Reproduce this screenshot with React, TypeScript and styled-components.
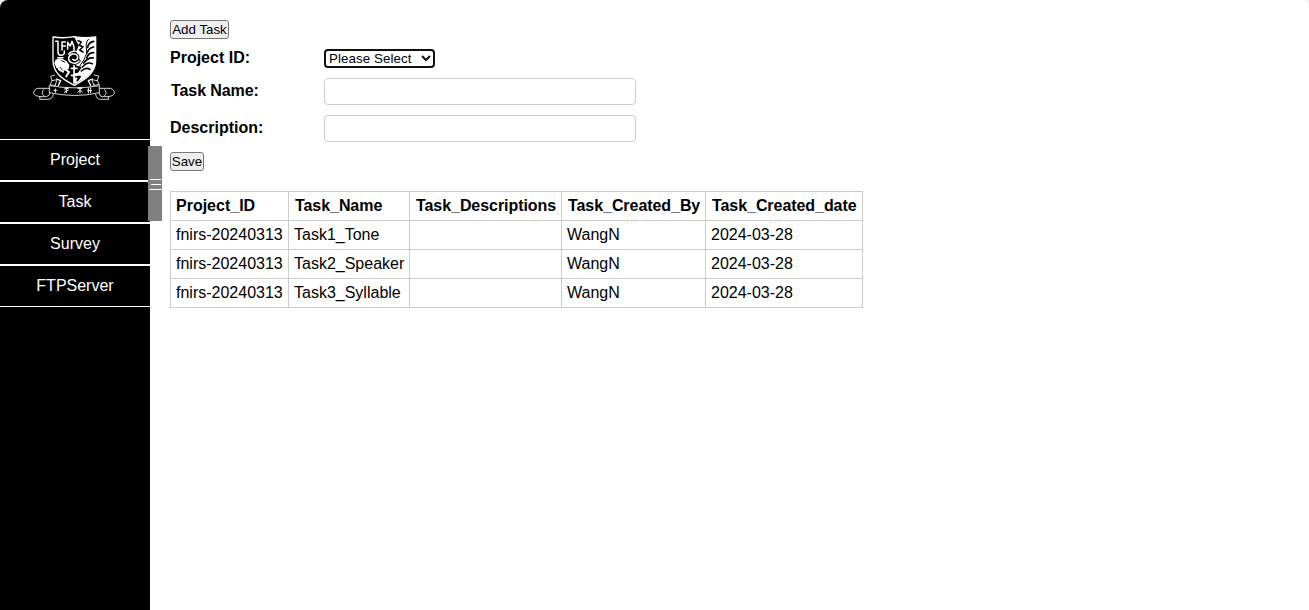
import React from 'react';
import styled, { createGlobalStyle } from 'styled-components';

const Global = createGlobalStyle`
  body { margin: 0; background: #f3f3f3; overflow: hidden; font: 16px/18px "Liberation Sans", Arial, sans-serif; color: #000; }
`;
const Page = styled.div`
  display: flex; height: 100vh; background: #fff; border-radius: 8px 8px 0 0; overflow: hidden; position: relative;
`;
const Sidebar = styled.aside`width: 150px; flex: none; background: #000;`;
const LogoArea = styled.div`
  height: 139px; box-sizing: border-box; padding: 30px 0 0 28px;
  svg { display: block; }
`;
const MenuItem = styled.a`
  display: block; box-sizing: border-box; height: 42px; line-height: 40px; text-align: center;
  color: #fff; border-top: 1px solid #fff; border-bottom: 1px solid #fff;
`;
const Handle = styled.div`
  position: absolute; left: 148px; top: 146px; width: 14px; height: 75px; box-sizing: border-box;
  padding: 33px 0 0 1px; background: #808080; display: flex; flex-direction: column; align-items: center; gap: 4px;
`;
const Grip = styled.span<{ $w: number }>`width: ${p => p.$w}px; height: 1px; background: #fff;`;
const Main = styled.main`padding: 20px; display: flex; flex-direction: column; align-items: flex-start;`;
const Button = styled.button<{ $w: number }>`
  box-sizing: border-box; width: ${p => p.$w}px; height: 19px; padding: 0; border: 1px solid #767676;
  border-radius: 3px; background: #efefef; color: #000; font: 13.333px/15px "Liberation Sans", Arial, sans-serif;
  white-space: nowrap; display: flex; align-items: center; justify-content: center;
`;
const Field = styled.div`
  display: flex; align-items: flex-start; margin-top: 10px;
`;
const Label = styled.label<{ $indent?: number; $drop?: number }>`
  width: 154px; box-sizing: border-box; padding: ${p => p.$drop || 0}px 0 0 ${p => p.$indent || 0}px; font-weight: 700;
  letter-spacing: ${p => (p.$indent ? '-0.08px' : 'normal')};
`;
const SelectBox = styled.div`
  box-sizing: border-box; width: 111px; height: 19px; border: 2px solid #101010; border-radius: 4px; background: #fff;
  display: flex; align-items: center; padding: 0 2px 0 3px; justify-content: space-between;
  font-size: 13.333px; line-height: 15px; letter-spacing: 0.08px; white-space: nowrap;
`;
const Input = styled.input`
  box-sizing: border-box; width: 312px; height: 27px; border: 1px solid #ccc; border-radius: 4px; padding: 5px; background: #fff;
`;
const SaveRow = styled.div`margin: 10px 0 20px;`;
const Table = styled.table`
  border-collapse: collapse; table-layout: fixed; width: 693px;
`;
const Cell = styled.td`
  border: 1px solid #ccc; padding: 5px; height: 18px; line-height: 18px; white-space: nowrap; text-align: left;
`;
const HeadCell = styled(Cell).attrs({ as: 'th' })<{ $inset: number }>`
  font-weight: 700; padding: 5px 0 5px ${p => 5 + p.$inset}px; letter-spacing: ${p => (p.$inset ? '-0.06px' : 'normal')};
`;

const Crest = () => (
  <svg width="92" height="74" viewBox="0 0 276 222" fill="none" stroke="#fff" strokeLinecap="round" strokeLinejoin="round">
    <path d="M75 21Q108 26 138 20Q170 26 203 21V91C203 129 174 147 139 166C103 148 75 129 75 91Z" fill="#000" strokeWidth="4" />
    <path d="M138 20Q170 27 202 22V92C202 128 172 145 139 163L138 134L155 111L139 103L155 90L145 67L152 46Z" fill="#fff" stroke="none" />
    <path d="M83 34H90V67C90 77 103 79 109 71V63M102 36V60M102 36H112M102 48H112M119 57V37L127 48L132 34L138 51V60M89 83H105" strokeWidth="4.5" />
    <path d="M82 90Q98 79 116 94L124 105L122 117L106 122L97 111L86 114L79 101Z" fill="#fff" stroke="none" />
    <path d="M93 118L105 125M112 118L123 126L115 139M88 111L96 117" strokeWidth="6" />
    <g stroke="#000">
      <path d="M150 32L160 36L153 46L165 50L155 60L165 66" strokeWidth="4.5" />
      <path d="M181 28C166 45 183 63 172 79C169 93 158 99 154 112" strokeWidth="3" />
      <path d="M197 34Q181 37 179 52M197 51Q181 54 178 68M197 68Q181 68 176 84M196 84Q180 82 167 99M193 101Q178 94 163 111M186 118Q174 110 160 123" strokeWidth="5" />
      <path d="M142 113H157L148 126H141M143 140H156L148 151" strokeWidth="6" />
      <path d="M101 92L110 96" strokeWidth="3" />
    </g>
    <path d="M153 93C142 106 121 98 122 84C124 71 142 68 148 77C152 88 142 94 134 88" stroke="#000" strokeWidth="10" />
    <path d="M153 93C142 106 121 98 122 84C124 71 142 68 148 77C152 88 142 94 134 88" strokeWidth="4.5" />
    <path d="M122 72Q132 60 150 65" strokeWidth="4" />
    <path d="M138 107V159M130 115H147M130 136H147" strokeWidth="5" />
    <g stroke="#fff" strokeWidth="2.5">
      <path d="M80 135L68 139L72 152L87 149L82 164M72 152L66 165L83 166M199 135L212 138L208 152L191 149L198 165M208 152L214 164L195 166" />
      <path d="M86 147L98 152L91 166M193 147L181 152L188 166" strokeWidth="4" />
      <path d="M65 167Q140 180 214 167V188Q140 205 65 188Z" fill="#000" />
      <path d="M65 175H29Q16 179 17 190Q21 199 36 200L35 208H59Q74 208 76 193M36 200H55Q65 198 66 189M47 179Q37 189 48 198" />
      <path d="M215 175H247Q260 179 259 190Q256 199 241 200L242 208H218Q205 208 203 193M241 200H222Q213 198 214 189M230 179Q240 189 229 198" />
    </g>
    <path d="M82 177V187M78 181H86M109 177L121 175M115 173V188M109 187L121 180M149 175H162M156 172V189M150 187L157 180L163 186M181 174V189M188 173V188M179 182H190" strokeWidth="3" />
  </svg>
);

const headers = [
  { text: 'Project_ID', inset: 0 },
  { text: 'Task_Name', inset: 1 },
  { text: 'Task_Descriptions', inset: 1 },
  { text: 'Task_Created_By', inset: 1 },
  { text: 'Task_Created_date', inset: 1 },
];
const tasks = ['Task1_Tone', 'Task2_Speaker', 'Task3_Syllable'];

export default function App() {
  return (
    <>
      <Global />
      <Page>
        <Sidebar>
          <LogoArea><Crest /></LogoArea>
          <nav>{['Project', 'Task', 'Survey', 'FTPServer'].map(t => <MenuItem key={t}>{t}</MenuItem>)}</nav>
        </Sidebar>
        <Main>
          <Button $w={59}>Add Task</Button>
          <Field>
            <Label>Project ID:</Label>
            <SelectBox role="combobox" tabIndex={0}>
              Please Select
              <svg width="10" height="7" viewBox="0 0 10 7" fill="none" stroke="#101010" strokeWidth="2"><path d="M1 1L5 5L9 1" /></svg>
            </SelectBox>
          </Field>
          <Field><Label $indent={1} $drop={4}>Task Name:</Label><Input /></Field>
          <Field><Label $drop={4}>Description:</Label><Input /></Field>
          <SaveRow><Button $w={34}>Save</Button></SaveRow>
          <Table>
            <colgroup>
              {[118, 121, 152, 144, 157].map((w, i) => <col key={i} width={w} />)}
            </colgroup>
            <thead>
              <tr>{headers.map(h => <HeadCell key={h.text} $inset={h.inset}>{h.text}</HeadCell>)}</tr>
            </thead>
            <tbody>
              {tasks.map(t => (
                <tr key={t}>
                  <Cell>fnirs-20240313</Cell><Cell>{t}</Cell><Cell /><Cell>WangN</Cell><Cell>2024-03-28</Cell>
                </tr>
              ))}
            </tbody>
          </Table>
        </Main>
        <Handle><Grip $w={11} /><Grip $w={10} /><Grip $w={13} /></Handle>
      </Page>
    </>
  );
}
